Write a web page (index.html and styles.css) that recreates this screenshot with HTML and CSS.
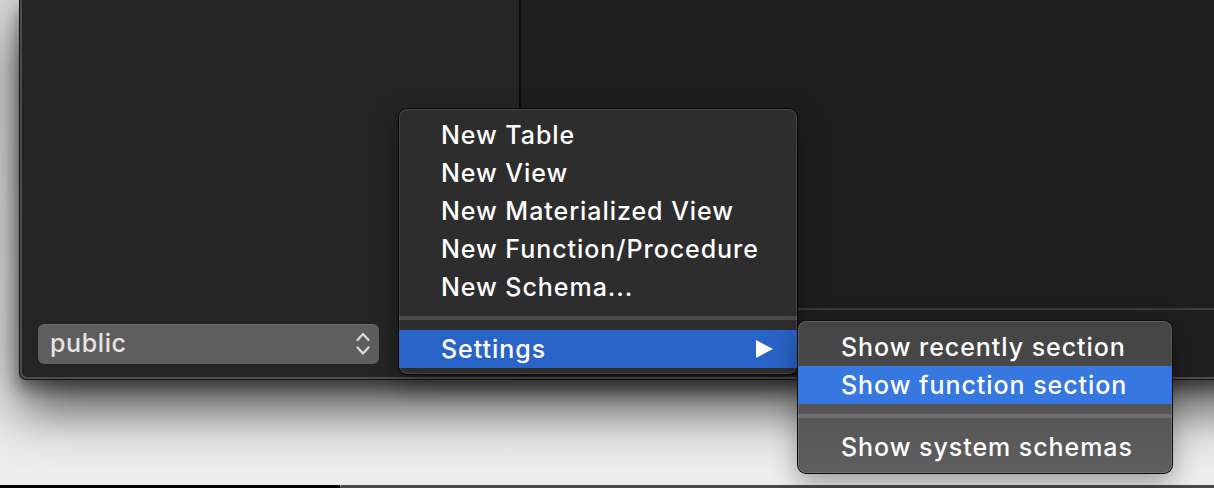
FILE: index.html
```html
<!DOCTYPE html>
<html lang="en">
<head>
<meta charset="utf-8">
<title>Schema menu</title>
<link rel="stylesheet" href="styles.css">
</head>
<body>
<div class="screen">
  <div class="window">
    <div class="sidebar">
      <div class="schema-select">
        <span class="schema-name">public</span>
        <svg class="chevrons" width="14" height="26" viewBox="0 0 14 26" aria-hidden="true">
          <polyline points="1.5,9 7,3 12.5,9" />
          <polyline points="1.5,16.5 7,22.5 12.5,16.5" />
        </svg>
      </div>
    </div>
    <div class="divider"></div>
    <div class="content">
      <div class="content-top"></div>
      <div class="content-rule"></div>
      <div class="content-bottom"></div>
    </div>
  </div>
  <div class="desk"></div>
  <div class="strip">
    <div class="strip-left"></div>
    <div class="strip-right"></div>
  </div>

  <div class="menu main-menu">
    <div class="menu-item">New Table</div>
    <div class="menu-item">New View</div>
    <div class="menu-item">New Materialized View</div>
    <div class="menu-item">New Function/Procedure</div>
    <div class="menu-item">New Schema...</div>
    <div class="menu-sep"><div class="sep-line"></div></div>
    <div class="menu-item is-open">
      <span>Settings</span>
      <svg class="sub-arrow" width="18" height="18" viewBox="0 0 18 18" aria-hidden="true">
        <polygon points="0,0 17,9 0,18" />
      </svg>
    </div>
  </div>

  <div class="menu sub-menu">
    <div class="menu-item">Show recently section</div>
    <div class="menu-item is-active">Show function section</div>
    <div class="menu-sep"><div class="sep-line"></div></div>
    <div class="menu-item">Show system schemas</div>
  </div>
</div>
</body>
</html>
```

FILE: styles.css
```css
* { box-sizing: border-box; }

html, body {
  margin: 0;
  padding: 0;
  width: 1214px;
  height: 488px;
  overflow: hidden;
}

body {
  font-family: "Inter", "Noto Sans", "Liberation Sans", sans-serif;
  background: #ececec;
}

.screen {
  position: relative;
  width: 1214px;
  height: 488px;
  overflow: hidden;
  display: flex;
  flex-direction: column;
  background: linear-gradient(180deg, #d8d8d8 0%, #e6e6e6 70%, #eeeeee 100%);
}

/* ---------- window ---------- */
.window {
  flex: none;
  margin-left: 19px;
  width: 1240px;
  height: 380px;
  display: flex;
  background: #4d4d4d;
  border-left: 1px solid #151515;
  border-bottom: 1px solid #151515;
  padding: 0 0 2px 2px;
  border-bottom-left-radius: 7px;
  box-shadow: 0 28px 52px rgba(0, 0, 0, 0.68), 0 8px 16px rgba(0, 0, 0, 0.4);
  position: relative;
  z-index: 1;
}

.sidebar {
  flex: none;
  width: 497px;
  background: #242424;
  display: flex;
  flex-direction: column;
  justify-content: flex-end;
  padding: 0 0 13px 16px;
  border-bottom-left-radius: 5px;
}

.schema-select {
  width: 341px;
  height: 40px;
  border-radius: 6px;
  background: #5e5e5e;
  box-shadow: inset 0 1px 0 rgba(255, 255, 255, 0.07);
  display: flex;
  align-items: center;
  justify-content: space-between;
  padding: 0 9px 0 12px;
}

.schema-name {
  color: #e4e4e4;
  font-size: 25px;
  font-weight: 500;
  letter-spacing: 0.6px;
  line-height: 1;
  margin-top: -2px;
}

.chevrons {
  display: block;
  fill: none;
  stroke: #dcdcdc;
  stroke-width: 2.2;
  stroke-linecap: round;
  stroke-linejoin: round;
}

.divider {
  flex: none;
  width: 2px;
  background: #0b0b0b;
}

.content {
  flex: 1;
  display: flex;
  flex-direction: column;
  background: #1e1e1e;
}

.content-top { flex: none; height: 308px; }
.content-rule { flex: none; height: 2px; background: #3a3a3a; }
.content-bottom { flex: 1; background: #1f1f1f; }

/* ---------- desktop ---------- */
.desk { flex: 1; }

.strip {
  flex: none;
  height: 3px;
  display: flex;
}
.strip-left { width: 340px; background: #050505; }
.strip-right { flex: 1; background: #4a4a4a; border-top-left-radius: 2px; }

/* ---------- menus ---------- */
.menu {
  position: absolute;
  z-index: 5;
  border: 1px solid rgba(0, 0, 0, 0.85);
  border-radius: 9px;
  color: #ffffff;
  font-size: 25px;
  font-weight: 500;
  letter-spacing: 0.95px;
  box-shadow: inset 0 0 0 1px rgba(255, 255, 255, 0.13), 0 10px 28px rgba(0, 0, 0, 0.35);
  overflow: hidden;
}

.main-menu {
  left: 398px;
  top: 108px;
  width: 400px;
  height: 267px;
  padding: 7px 0 6px;
  background: #2d2d2d;
}

.sub-menu {
  left: 797px;
  top: 320px;
  width: 376px;
  height: 154px;
  padding: 7px 0;
  background: linear-gradient(180deg, #454545 0%, #474747 35%, #565656 60%, #5e5e5e 100%);
  z-index: 6;
}

.menu-item {
  height: 38px;
  display: flex;
  align-items: center;
  justify-content: space-between;
  padding: 0 23px 0 42px;
  line-height: 1;
  white-space: nowrap;
}

.main-menu .menu-item { padding-left: 42px; }
.sub-menu .menu-item { padding-left: 43px; }

.menu-item.is-open { background: #2a63c8; }
.menu-item.is-active { background: #3678e0; }

.sub-arrow { display: block; fill: #ffffff; }

.menu-sep {
  height: 24px;
  padding-top: 10px;
}
.sep-line {
  height: 4px;
  background: rgba(255, 255, 255, 0.14);
}
```
